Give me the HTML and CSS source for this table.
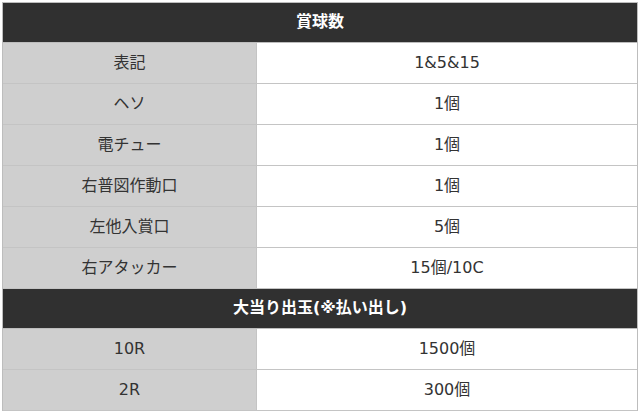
FILE: index.html
```html
<!DOCTYPE html>
<html lang="ja">
<head>
<meta charset="utf-8">
<link rel="stylesheet" href="styles.css">
</head>
<body>
<div class="spec">
  <div class="head">賞球数</div>
  <div class="row"><div class="label">表記</div><div class="value">1&amp;5&amp;15</div></div>
  <div class="row"><div class="label">ヘソ</div><div class="value">1個</div></div>
  <div class="row"><div class="label">電チュー</div><div class="value">1個</div></div>
  <div class="row"><div class="label">右普図作動口</div><div class="value">1個</div></div>
  <div class="row"><div class="label">左他入賞口</div><div class="value">5個</div></div>
  <div class="row"><div class="label">右アタッカー</div><div class="value">15個/10C</div></div>
  <div class="head">大当り出玉(※払い出し)</div>
  <div class="row"><div class="label">10R</div><div class="value">1500個</div></div>
  <div class="row"><div class="label">2R</div><div class="value">300個</div></div>
</div>
</body>
</html>
```

FILE: styles.css
```css
html, body {
  margin: 0;
  padding: 0;
  background: #ffffff;
}
body {
  padding: 2px 2px 0 2px;
  font-family: "DejaVu Sans", "Noto Sans CJK JP", sans-serif;
  font-size: 16px;
  line-height: 20px;
  color: #333333;
}
.spec {
  width: 634px;
  border: 1px solid #bdbdbd;
  border-bottom: none;
}
.head {
  height: 40px;
  border-bottom: 1px solid #bdbdbd;
  background: #303030;
  color: #ffffff;
  font-weight: bold;
  display: flex;
  align-items: center;
  justify-content: center;
  padding-bottom: 2px;
  box-sizing: border-box;
}
.row {
  display: grid;
  grid-template-columns: 254px 1fr;
  height: 40px;
  border-bottom: 1px solid #c4c4c4;
}
.label, .value {
  display: flex;
  align-items: center;
  justify-content: center;
}
.label {
  background: #cfcfcf;
  border-right: 1px solid #c4c4c4;
}
.value {
  background: #ffffff;
}
```
